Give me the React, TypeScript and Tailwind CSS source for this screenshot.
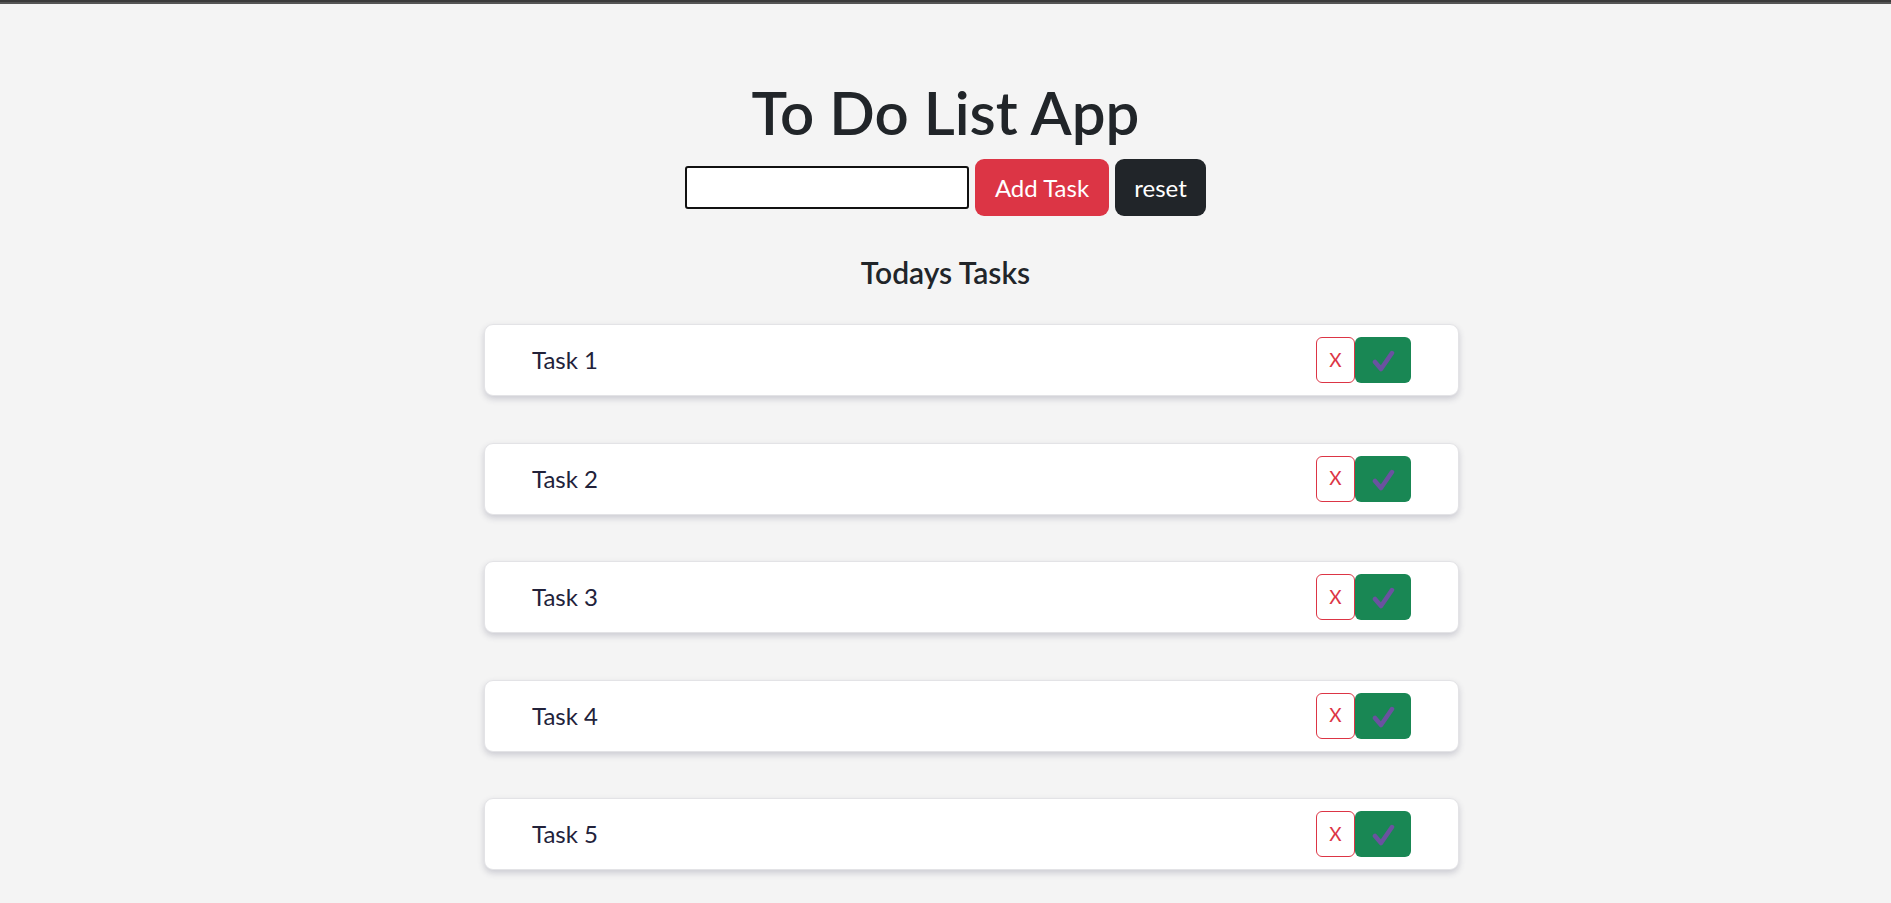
import React from "react";

const font = { fontFamily: 'Lato, "Open Sans", sans-serif' };

function Check() {
  return (
    <svg width="24" height="24" viewBox="0 0 24 24" fill="none">
      <path d="M4 14 L10 21 L21 5" stroke="#6a52a0" strokeWidth="4.5" strokeLinecap="round" strokeLinejoin="round" />
    </svg>
  );
}

function TaskRow({ name }: { name: string }) {
  return (
    <div className="flex h-[72px] items-center justify-between rounded-[9px] border border-[#e3e3e6] bg-white pl-[47px] pr-[47px] shadow-[0_3px_6px_rgba(60,60,90,0.22)]">
      <span className="text-[24px] text-[#22223a]">{name}</span>
      <div className="flex">
        <button className="flex h-[46px] w-[39px] items-center justify-center rounded-[6px] border border-[#dc3545] bg-white text-[19px] text-[#dc3545]">
          X
        </button>
        <button className="flex h-[46px] w-[56px] items-center justify-center rounded-[6px] bg-[#198754]">
          <Check />
        </button>
      </div>
    </div>
  );
}

export default function App() {
  return (
    <div className="min-h-[903px] bg-[#f4f4f4]" style={font}>
      <div className="h-[2px] bg-[#3a3a3a]" />
      <div className="h-[2px] bg-[#555]" />
      <div className="flex flex-col items-center pt-[72px]">
        <h1 className="text-[60px] font-semibold leading-[1.2] text-[#212529]">To Do List App</h1>
        <div className="mt-[11px] flex items-center gap-[6px]">
          <input className="h-[43px] w-[284px] rounded-[3px] border-2 border-[#111] bg-white" />
          <button className="h-[57px] w-[134px] rounded-[9px] bg-[#dc3545] text-[24px] text-white">Add Task</button>
          <button className="h-[57px] w-[91px] rounded-[9px] bg-[#212529] text-[24px] text-white">reset</button>
        </div>
        <h5 className="mt-[38px] text-[30px] font-semibold leading-[1.2] text-[#212529]">Todays Tasks</h5>
      </div>
      <div className="ml-[484px] mt-[34px] flex w-[975px] flex-col gap-[46.5px]">
        {["Task 1", "Task 2", "Task 3", "Task 4", "Task 5"].map((t) => (
          <TaskRow key={t} name={t} />
        ))}
      </div>
    </div>
  );
}
